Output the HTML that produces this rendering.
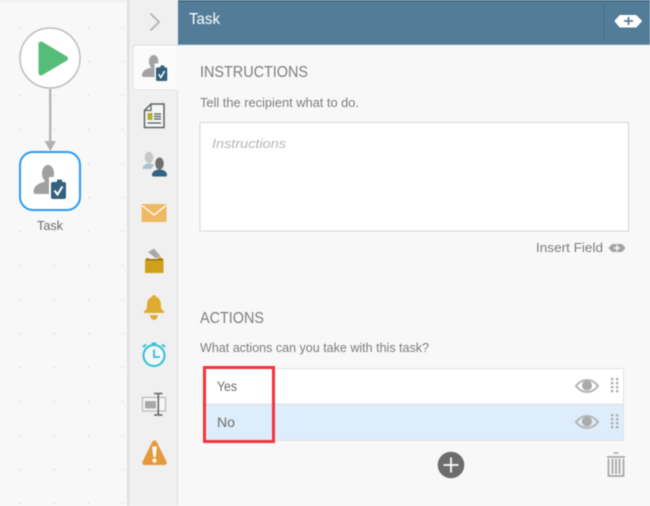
<!DOCTYPE html>
<html>
<head>
<meta charset="utf-8">
<style>
html,body{margin:0;padding:0;background:#f8f8f8}
body{width:650px;height:506px;overflow:hidden}
svg{display:block;filter:blur(0.4px)}
text{font-family:"Liberation Sans",sans-serif}
</style>
</head>
<body>
<svg width="650" height="506" viewBox="0 0 650 506" xmlns="http://www.w3.org/2000/svg">
<defs>
<g id="person"><ellipse cx="14.500" cy="8.500" rx="6" ry="8.500"/><path d="M0 27c0-5 3.500-8 8.500-9.500l4-1.500h4l2 1.500V29H2.500C1 29 0 28.500 0 27z"/></g>
<g id="clip"><path d="M2 3h3.500l1-2.500h4l1 2.500H13a2 2 0 0 1 2 2v13a2 2 0 0 1-2 2H2a2 2 0 0 1-2-2V5a2 2 0 0 1 2-2z" fill="#33607d"/><path d="M3.500 11.500l3 4L11.500 7.500" fill="none" stroke="#fff" stroke-width="2"/></g>
<pattern id="dots" width="34" height="34" patternUnits="userSpaceOnUse" x="2" y="6"><rect x="18" y="21" width="1.200" height="1.200" fill="#d0d0d0"/></pattern>
</defs>

<!-- canvas -->
<rect width="650" height="506" fill="#f8f8f8"/>
<rect width="127" height="506" fill="url(#dots)"/>
<rect x="0" y="0" width="127" height="2" fill="#efefef"/>

<!-- start node -->
<circle cx="50" cy="58" r="30" fill="#fff" stroke="#bdbdbd" stroke-width="1.500"/>
<path d="M41 44L65.500 58.500 41 73z" fill="#55bd78" stroke="#55bd78" stroke-width="5" stroke-linejoin="round"/>
<rect x="49" y="89" width="2.400" height="53" fill="#b5b5b5"/>
<path d="M44.500 141h11.500l-5.700 10z" fill="#b0b0b0"/>

<!-- task node -->
<rect x="20" y="152" width="60" height="58" rx="13" fill="#fff" stroke="#2b9bee" stroke-width="2"/>
<use href="#person" transform="translate(33.500 165)" fill="#a0a0a0"/>
<rect x="49" y="177" width="19" height="23" fill="#fff"/>
<use href="#clip" transform="translate(51 179)"/>
<text x="37" y="230" font-size="12.500" fill="#6b6b6b" textLength="26" lengthAdjust="spacingAndGlyphs">Task</text>

<!-- icon rail -->
<rect x="127" y="0" width="51" height="506" fill="#f0f0f0"/>
<rect x="127" y="0" width="2.500" height="506" fill="#dfdfdf"/>
<rect x="177" y="45" width="1" height="461" fill="#dcdcdc"/>
<path d="M150.500 13.500l8.500 8.500-8.500 8.500" fill="none" stroke="#b2b2b2" stroke-width="1.800"/>
<path d="M178 45H136a3 3 0 0 0-3 3v39a3 3 0 0 0 3 3h42z" fill="#fbfbfb" stroke="#e0e0e0"/>
<rect x="176" y="46" width="3" height="44" fill="#f8f8f8"/>

<use href="#person" transform="translate(142 55) scale(.8 .76)" fill="#a3a3a3"/>
<rect x="154.500" y="63.500" width="14" height="19" fill="#fbfbfb"/>
<use href="#clip" transform="translate(156 65) scale(.75 .8)"/>

<!-- form icon -->
<path d="M151 104h13v23.500h-19.500v-17z" fill="#f6f6f6" stroke="#5d6466" stroke-width="1.500"/>
<path d="M144.500 110.500h6.500v-6.500" fill="none" stroke="#5d6466" stroke-width="1.300"/>
<rect x="147.500" y="113" width="5" height="7" fill="#b2b02e"/>
<path d="M154 114h7M154 116.500h7M154 119h7M147.500 123h13.500" stroke="#4f5759" stroke-width="1.300"/>

<!-- people -->
<ellipse cx="149" cy="157.500" rx="4.300" ry="5.800" fill="#c7c9c9"/>
<path d="M142.500 169c0-3.500 2.500-5.500 6.500-5.500 2.500 0 4 .5 5 1.500l-3 4z" fill="#a9c2d4"/>
<ellipse cx="159.500" cy="163.500" rx="4.300" ry="6" fill="#6f6f6f"/>
<path d="M153.500 176.500c-1 0-1.500-.7-1.500-1.500 0-3.500 3.500-5.500 7.500-5.500s7.500 2 7.500 5.500c0 .8-.5 1.500-1.500 1.500z" fill="#2f6384"/>

<!-- mail -->
<rect x="141.500" y="204" width="25" height="18" rx="1.500" fill="#efb963"/>
<path d="M142 205.500l12 9.500 12-9.500" fill="none" stroke="#fbf3e3" stroke-width="1.500"/>

<!-- ballot box -->
<path d="M148 252l6-3.500 6 7-4 3z" fill="#a8a8a8"/>
<path d="M147.500 257.500l-2.500 2V273h18.500v-13.500l-2.500-2-1.500-1.500-2 3h-8z" fill="#d09f1b"/>
<rect x="146" y="259" width="17" height="1.300" fill="#8c6d12"/>

<!-- bell -->
<path d="M154 295c-1.300 0-2 .7-2 1.700-3.500 1.300-5 4.500-5 8.300v1.500c0 2.500-1.500 4-3.300 5 0 1 .5 1.500 1.500 1.500h17.600c1 0 1.500-.5 1.500-1.500-1.800-1-3.300-2.500-3.300-5V305c0-3.800-1.500-7-5-8.300 0-1-.7-1.700-2-1.700z" fill="#e0ab33"/>
<path d="M150 315h8c-.5 3-2 5-4 5s-3.500-2-4-5z" fill="#e0ab33"/>

<!-- clock -->
<circle cx="154" cy="355.500" r="10.500" fill="#f5f7f7" stroke="#2fc0d8" stroke-width="2"/>
<path d="M154 349.500v7.500h6" fill="none" stroke="#2fc0d8" stroke-width="1.800"/>
<rect x="151.500" y="342.500" width="5" height="1.800" rx=".8" fill="#2fc0d8"/>
<path d="M143 347l3-2.500M165 347l-3-2.500" stroke="#2fc0d8" stroke-width="2"/>

<!-- text field -->
<rect x="142.500" y="397.500" width="23" height="13.500" fill="#f7f7f7" stroke="#bcbcbc" stroke-width="1.300"/>
<rect x="145" y="401" width="11" height="7.500" fill="#a8a8a8"/>
<path d="M154 393.500h8.500M158.300 393.500v21.500M154 415h8.500" stroke="#5f6466" stroke-width="1.500" fill="none"/>

<!-- warning -->
<path d="M154.500 440.500c-1.200 0-1.800.7-2.500 1.800l-9.500 19.500c-.7 1.700.2 3.200 2 3.200h20c1.800 0 2.700-1.500 2-3.200L157 442.300c-.7-1.100-1.300-1.800-2.500-1.800z" fill="#e59a3a"/>
<path d="M152.200 446.500h4.600l-1 10.500h-2.600z" fill="#fff"/><circle cx="154.500" cy="460.500" r="2.100" fill="#fff"/>

<!-- header -->
<rect x="178" y="0" width="472" height="45" fill="#537c98"/>
<rect x="178" y="0" width="472" height="2" fill="#476e88"/>
<rect x="178" y="44" width="472" height="1" fill="#6b94ae"/>
<text x="189" y="24" font-size="15.500" fill="#fff" textLength="31" lengthAdjust="spacingAndGlyphs">Task</text>
<rect x="603.500" y="3" width="1" height="36" fill="#466d86"/>
<path d="M620 15.500h16l5.500 5.500-5.500 6h-16l-5-6z" fill="#fff" stroke="#fff" stroke-width="1" stroke-linejoin="round"/>
<path d="M628.500 17v8M624 21h9" stroke="#537c98" stroke-width="1.800"/>

<!-- instructions -->
<text x="200" y="77" font-size="16" fill="#7d7d7d" textLength="108" lengthAdjust="spacingAndGlyphs">INSTRUCTIONS</text>
<text x="200" y="107" font-size="12.500" fill="#7d7d7d" textLength="159" lengthAdjust="spacingAndGlyphs">Tell the recipient what to do.</text>
<rect x="200" y="122.500" width="428.500" height="108.500" fill="#fff" stroke="#d6d6d6"/>
<text x="212" y="148" font-size="13" font-style="italic" fill="#b5b5b5" textLength="74" lengthAdjust="spacingAndGlyphs">Instructions</text>
<text x="536" y="252" font-size="13" fill="#7d7d7d" textLength="67" lengthAdjust="spacingAndGlyphs">Insert Field</text>
<path d="M612 244h10l3.500 4-3.500 4h-10l-3.500-4z" fill="#a2a2a2"/>
<path d="M617 245v6M614 248h6" stroke="#f8f8f8" stroke-width="1.500"/>

<!-- actions -->
<text x="200" y="323" font-size="16" fill="#7d7d7d" textLength="64" lengthAdjust="spacingAndGlyphs">ACTIONS</text>
<text x="200" y="352" font-size="12.500" fill="#7d7d7d" textLength="229" lengthAdjust="spacingAndGlyphs">What actions can you take with this task?</text>

<rect x="204.500" y="368.500" width="419" height="72" rx="1" fill="#fff" stroke="#e2e2e2"/>
<rect x="205" y="405" width="418" height="35" fill="#deedfb"/>
<rect x="205" y="403.500" width="418" height="1.500" fill="#dfe3e6"/>
<rect x="204.500" y="367.500" width="69" height="74" fill="none" stroke="#f4333a" stroke-width="3"/>
<text x="217" y="391" font-size="14" fill="#6b6b6b" textLength="20" lengthAdjust="spacingAndGlyphs">Yes</text>
<text x="217" y="427" font-size="14" fill="#6b6b6b" textLength="18" lengthAdjust="spacingAndGlyphs">No</text>

<g id="eye" fill="none">
<path d="M576 386c3-4 7-6 11-6s8 2 11 6c-3 4-7 6-11 6s-8-2-11-6z" stroke="#b5b5b5" stroke-width="2"/>
<circle cx="587" cy="385.500" r="5" fill="#aaa"/>
</g>
<use href="#eye" y="36"/>
<g id="grip" fill="#aaa">
<rect x="611" y="378" width="2.300" height="2.300"/><rect x="616" y="378" width="2.300" height="2.300"/>
<rect x="611" y="382" width="2.300" height="2.300"/><rect x="616" y="382" width="2.300" height="2.300"/>
<rect x="611" y="386" width="2.300" height="2.300"/><rect x="616" y="386" width="2.300" height="2.300"/>
<rect x="611" y="390" width="2.300" height="2.300"/><rect x="616" y="390" width="2.300" height="2.300"/>
</g>
<use href="#grip" y="36"/>

<!-- add -->
<circle cx="451" cy="465" r="13.300" fill="#6c6c6c"/>
<path d="M451 457.500v15M443.500 465h15" stroke="#fff" stroke-width="1.800"/>

<!-- trash -->
<path d="M613.500 453h5" stroke="#a8a8a8" stroke-width="1.500"/>
<path d="M607 457h18" stroke="#a8a8a8" stroke-width="1.800"/>
<path d="M608.500 459v17h15v-17" fill="none" stroke="#a8a8a8" stroke-width="1.800"/>
<path d="M612.500 459v15M616 459v15M619.500 459v15" stroke="#a8a8a8" stroke-width="1.800"/>
</svg>
</body>
</html>
